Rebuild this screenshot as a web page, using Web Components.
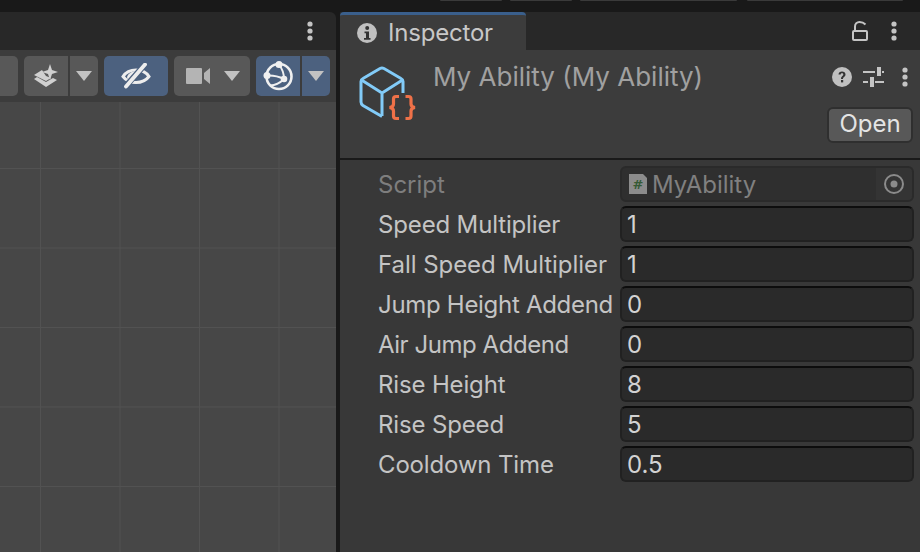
<!DOCTYPE html>
<html>
<head>
<meta charset="utf-8">
<style>
html, body { margin: 0; height: 100%; background: #191919; overflow: hidden; }
body { font-family: Inter, "Liberation Sans", sans-serif; display: flex; flex-direction: column; width: 920px; height: 552px; }
#root { display: flex; flex: 1; min-height: 0; gap: 4px; }
</style>
</head>
<body>
<top-strip></top-strip>
<div id="root">
    <scene-panel></scene-panel>
    <inspector-panel>
        <prop-row label="Speed Multiplier" value="1"></prop-row>
        <prop-row label="Fall Speed Multiplier" value="1" spacing="-.05"></prop-row>
        <prop-row label="Jump Height Addend" value="0" spacing="-.3"></prop-row>
        <prop-row label="Air Jump Addend" value="0" spacing="-.45"></prop-row>
        <prop-row label="Rise Height" value="8"></prop-row>
        <prop-row label="Rise Speed" value="5"></prop-row>
        <prop-row label="Cooldown Time" value="0.5"></prop-row>
    </inspector-panel>
</div>

<script>
const ICONS = {
    dots: `<svg width="6" height="20" viewBox="0 0 6 20" fill="#c4c4c4"><circle cx="3" cy="3" r="2.6"/><circle cx="3" cy="10" r="2.6"/><circle cx="3" cy="17" r="2.6"/></svg>`,
    caret: `<svg width="16" height="10" viewBox="0 0 16 10"><polygon points="0,0 16,0 8,10" fill="#c2c2c2"/></svg>`,
    layers: `<svg width="26" height="24" viewBox="0 0 26 24" fill="#d0d0d0"><path d="M17 0l2 6 6 2-6 2-2 6-2-6-6-2 6-2z"/><path d="M9 6l4 6 5 2-5 3L1 11z"/><path d="M1 15l3-2 9 5 7-4 4 2-11 7z"/></svg>`,
    eye: `<svg width="30" height="26" viewBox="0 0 30 26" fill="none" stroke="#ededed"><path d="M2 13.500c3-4.500 7.500-6.500 13-6.500s10 2 13 6.500c-3 4-7.500 6-13 6s-10-2-13-6z" stroke-width="3"/><path d="M6 14c1-3 4-6 11-6l-7 10c-2-.5-4-2-4-4z" fill="#ededed" stroke="none"/><path d="M24 1.500L4 24" stroke="#4c617f" stroke-width="6"/><path d="M24 1.500L5 23.500" stroke-width="3.800" stroke-linecap="round"/></svg>`,
    camera: `<svg width="24" height="18" viewBox="0 0 24 18" fill="#b4b4b4"><rect x="0" y="1" width="16" height="16" rx="1"/><path d="M18 6l6-5v16l-6-5z"/></svg>`,
    gizmo: `<svg width="30" height="30" viewBox="0 0 30 30" fill="none" stroke="#f0f0f0" stroke-width="2"><circle cx="16" cy="15.500" r="12.500" stroke-width="2.600"/><path d="M4 14.500Q13 14 21 18M16 3.500Q21 10 21 18M21 18Q15 24 7 24.500"/><g fill="#f0f0f0" stroke="none"><circle cx="16" cy="3.500" r="3.500"/><circle cx="4" cy="14.500" r="3.500"/><circle cx="21" cy="18" r="3.300"/></g></svg>`,
    info: `<svg width="20" height="20" viewBox="0 0 20 20"><circle cx="10" cy="10" r="10" fill="#c0c0c0"/><circle cx="10.200" cy="5" r="2" fill="#333"/><path d="M7.500 8.500h4.500v6.500h1.500v1.800h-6.500V15H9v-4.700H7.500z" fill="#333"/></svg>`,
    lock: `<svg width="16" height="20" viewBox="0 0 16 20" fill="none" stroke="#c4c4c4" stroke-width="2"><rect x="1" y="10" width="14" height="9" rx="1"/><path d="M3 10V5.500C3 3 5 1 7.500 1S12 2 13.500 3.500"/></svg>`,
    help: `<svg width="20" height="20" viewBox="0 0 20 20"><circle cx="10" cy="10" r="10" fill="#c0c0c0"/><path d="M6.500 7.500C6.500 5.500 8 4.500 10 4.500s3.500 1 3.500 3c0 2.500-2.500 2.300-2.500 4.500H9c0-3 2.300-3 2.300-4.500 0-.8-.5-1.200-1.300-1.200s-1.300.5-1.300 1.200z" fill="#333"/><rect x="9" y="13" width="2.200" height="2.400" fill="#333"/></svg>`,
    sliders: `<svg width="21" height="20" viewBox="0 0 21 20" fill="#c4c4c4"><rect x="0" y="4" width="12" height="2"/><rect x="19" y="4" width="2" height="2"/><rect x="14" y="0" width="4" height="9"/><rect x="0" y="14" width="5" height="2"/><rect x="12" y="14" width="9" height="2"/><rect x="7" y="10" width="4" height="10"/></svg>`,
    cube: `<svg width="60" height="60" viewBox="0 0 60 60" fill="none"><path d="M24 50.500L5 39.500Q3 38 3 36V15.500Q3 13.500 5 12.500L22 2.500Q24 1.500 26 2.500L43 12.500Q45 13.500 45 15.500V27" stroke="#82cbf8" stroke-width="3"/><path d="M3.500 14L24 27 44.500 14M24 27V50" stroke="#82cbf8" stroke-width="3"/><path d="M41 30.500h-3q-2.500 0-2.500 2.500v5q0 3-4 3.500 4 .5 4 3.500v5q0 2.500 2.500 2.500h3M47.500 30.500h3q2.500 0 2.500 2.500v5q0 3 4 3.500-4 .5-4 3.500v5q0 2.500-2.500 2.500h-3" stroke="#ef7148" stroke-width="3.200"/></svg>`,
    script: `<svg width="18" height="20" viewBox="0 0 18 20"><path d="M0 0h14l4 4v16H0z" fill="#8c8c8c"/><text x="9" y="15" text-anchor="middle" font-family="DejaVu Sans" font-weight="700" font-size="13" fill="#355a35">#</text></svg>`,
    target: `<svg width="20" height="20" viewBox="0 0 20 20" fill="none"><circle cx="10" cy="10" r="9" stroke="#8b8b8b" stroke-width="2"/><circle cx="10" cy="10" r="3.500" fill="#8b8b8b"/></svg>`
};

class TopStrip extends HTMLElement {
    connectedCallback() {
        this.attachShadow({ mode: 'open' });
        this.shadowRoot.innerHTML = `
            <style>
                :host { display: flex; height: 12px; flex: none; gap: 8px; padding-left: 440px; }
                div { height: 1px; background: #3a3a3a; border-radius: 0 0 2px 2px; }
            </style>
            <div style="width:62px"></div>
            <div style="width:62px"></div>
            <div style="width:157px"></div>
            <div style="width:156px;margin-left:2px"></div>
        `;
    }
}
customElements.define('top-strip', TopStrip);

class ToolButton extends HTMLElement {
    connectedCallback() {
        const w = this.getAttribute('w');
        const caret = this.getAttribute('caret');
        const on = this.hasAttribute('on');
        this.attachShadow({ mode: 'open' });
        this.shadowRoot.innerHTML = `
            <style>
                :host { display: flex; height: 40px; flex: none; }
                .part {
                    display: flex; align-items: center; justify-content: center;
                    height: 100%;
                    background: ${on ? '#4c617f' : '#585858'};
                    box-sizing: border-box;
                }
                .main { width: ${w}px; border-radius: 5px 0 0 5px; }
                .main.solo { border-radius: 5px; }
                .drop { width: ${caret}px; margin-left: 2px; border-radius: 0 5px 5px 0; }
            </style>
            <div class="part main ${caret ? '' : 'solo'}"><slot></slot></div>
            ${caret ? `<div class="part drop">${ICONS.caret}</div>` : ''}
        `;
    }
}
customElements.define('tool-button', ToolButton);

class ScenePanel extends HTMLElement {
    connectedCallback() {
        this.attachShadow({ mode: 'open' });
        this.shadowRoot.innerHTML = `
            <style>
                :host { display: flex; flex-direction: column; width: 336px; height: 100%; flex: none; }
                .tabs {
                    height: 38px; background: #282828; border-radius: 0 6px 0 0;
                    display: flex; align-items: center; justify-content: flex-end;
                    padding-right: 23px; box-sizing: border-box; flex: none;
                }
                .toolbar {
                    height: 52px; background: #3c3c3c; flex: none;
                    display: flex; align-items: center; gap: 6px;
                }
                .first { width: 18px; height: 40px; background: #585858; border-radius: 0 5px 5px 0; flex: none; }
                .scene {
                    flex: 1;
                    background-color: #474747;
                    background-image:
                        linear-gradient(#525252 1px, transparent 1px),
                        linear-gradient(90deg, #525252 1px, transparent 1px);
                    background-size: 79.5px 79.5px;
                    background-position: 40px 66px;
                }
            </style>
            <div class="tabs">${ICONS.dots}</div>
            <div class="toolbar">
                <div class="first"></div>
                <tool-button w="44" caret="28">${ICONS.layers}</tool-button>
                <tool-button w="64" on>${ICONS.eye}</tool-button>
                <tool-button w="76"><span style="display:flex;align-items:center;gap:14px;padding-left:2px">${ICONS.camera}${ICONS.caret}</span></tool-button>
                <tool-button w="44" caret="28" on>${ICONS.gizmo}</tool-button>
            </div>
            <div class="scene"></div>
        `;
    }
}
customElements.define('scene-panel', ScenePanel);

class PropRow extends HTMLElement {
    connectedCallback() {
        const label = this.getAttribute('label');
        const value = this.getAttribute('value');
        const spacing = this.getAttribute('spacing') || '-.15';
        this.attachShadow({ mode: 'open' });
        this.shadowRoot.innerHTML = `
            <style>
                :host { display: flex; align-items: center; height: 36px; flex: none; }
                .label { width: 242px; flex: none; font-size: 24px; color: #c4c4c4; white-space: nowrap; letter-spacing: ${spacing}px; }
                .field {
                    flex: 1; height: 36px; box-sizing: border-box;
                    background: #2a2a2a; border: 2px solid #212121; border-top-color: #0d0d0d;
                    border-radius: 6px; padding-left: 5px;
                    font-size: 24px; color: #d2d2d2; line-height: 33px;
                }
            </style>
            <div class="label">${label}</div>
            <div class="field">${value}</div>
        `;
    }
}
customElements.define('prop-row', PropRow);

class ScriptRow extends HTMLElement {
    connectedCallback() {
        this.attachShadow({ mode: 'open' });
        this.shadowRoot.innerHTML = `
            <style>
                :host { display: flex; align-items: center; height: 36px; flex: none; }
                .label { width: 242px; flex: none; font-size: 24px; color: #7e7e7e; }
                .field {
                    flex: 1; height: 36px; box-sizing: border-box; display: flex; align-items: center;
                    background: #2f2f2f; border: 2px solid #2a2a2a; border-radius: 6px; padding-left: 7px;
                    font-size: 24px; color: #808080;
                }
                .name { margin-left: 5px; flex: 1; }
                .pick { width: 36px; height: 100%; background: #343434; display: flex; align-items: center; justify-content: center; border-radius: 0 4px 4px 0; }
            </style>
            <div class="label">Script</div>
            <div class="field">${ICONS.script}<span class="name">MyAbility</span><div class="pick">${ICONS.target}</div></div>
        `;
    }
}
customElements.define('script-row', ScriptRow);

class InspectorPanel extends HTMLElement {
    connectedCallback() {
        this.attachShadow({ mode: 'open' });
        this.shadowRoot.innerHTML = `
            <style>
                :host { display: flex; flex-direction: column; flex: 1; min-width: 0; height: 100%; background: #383838; }
                .tabs { height: 38px; background: #282828; display: flex; align-items: center; flex: none; }
                .tab {
                    width: 186px; height: 100%; box-sizing: border-box; background: #3c3c3c;
                    border-top: 3px solid #3a5f8c; border-radius: 4px 4px 0 0;
                    display: flex; align-items: center; gap: 11px; padding-left: 17px;
                    font-size: 24px; color: #c8c8c8; letter-spacing: -.2px;
                }
                .tab-tools { flex: 1; display: flex; justify-content: flex-end; align-items: center; gap: 23px; padding-right: 23px; }
                .header {
                    height: 110px; background: #3c3c3c; flex: none; box-sizing: border-box;
                    border-bottom: 2px solid #1a1a1a;
                    display: flex; padding: 15px 12px 0 18px;
                }
                .cube { width: 60px; height: 60px; margin-top: 1px; flex: none; }
                .title { flex: 1; margin-left: 15px; font-size: 26px; color: #a0a0a0; line-height: 24px; white-space: nowrap; }
                .side { display: flex; flex-direction: column; align-items: flex-end; }
                .icons { display: flex; align-items: center; height: 24px; }
                .icons svg:nth-child(2) { margin: 0 18px 0 11px; }
                .open {
                    margin-top: 18px; width: 86px; height: 36px; box-sizing: border-box;
                    background: #585858; border: 2px solid #2f2f2f; border-radius: 6px;
                    font-size: 24px; color: #e4e4e4; text-align: center; line-height: 30px; margin-right: -5px;
                }
                .body { flex: 1; display: flex; flex-direction: column; gap: 4px; padding: 6px 6px 0 38px; }
            </style>
            <div class="tabs">
                <div class="tab">${ICONS.info}<span>Inspector</span></div>
                <div class="tab-tools">${ICONS.lock}${ICONS.dots}</div>
            </div>
            <div class="header">
                <div class="cube">${ICONS.cube}</div>
                <div class="title">My Ability (My Ability)</div>
                <div class="side">
                    <div class="icons">${ICONS.help}${ICONS.sliders}${ICONS.dots}</div>
                    <div class="open">Open</div>
                </div>
            </div>
            <div class="body">
                <script-row></script-row>
                <slot></slot>
            </div>
        `;
    }
}
customElements.define('inspector-panel', InspectorPanel);
</script>
</body>
</html>
